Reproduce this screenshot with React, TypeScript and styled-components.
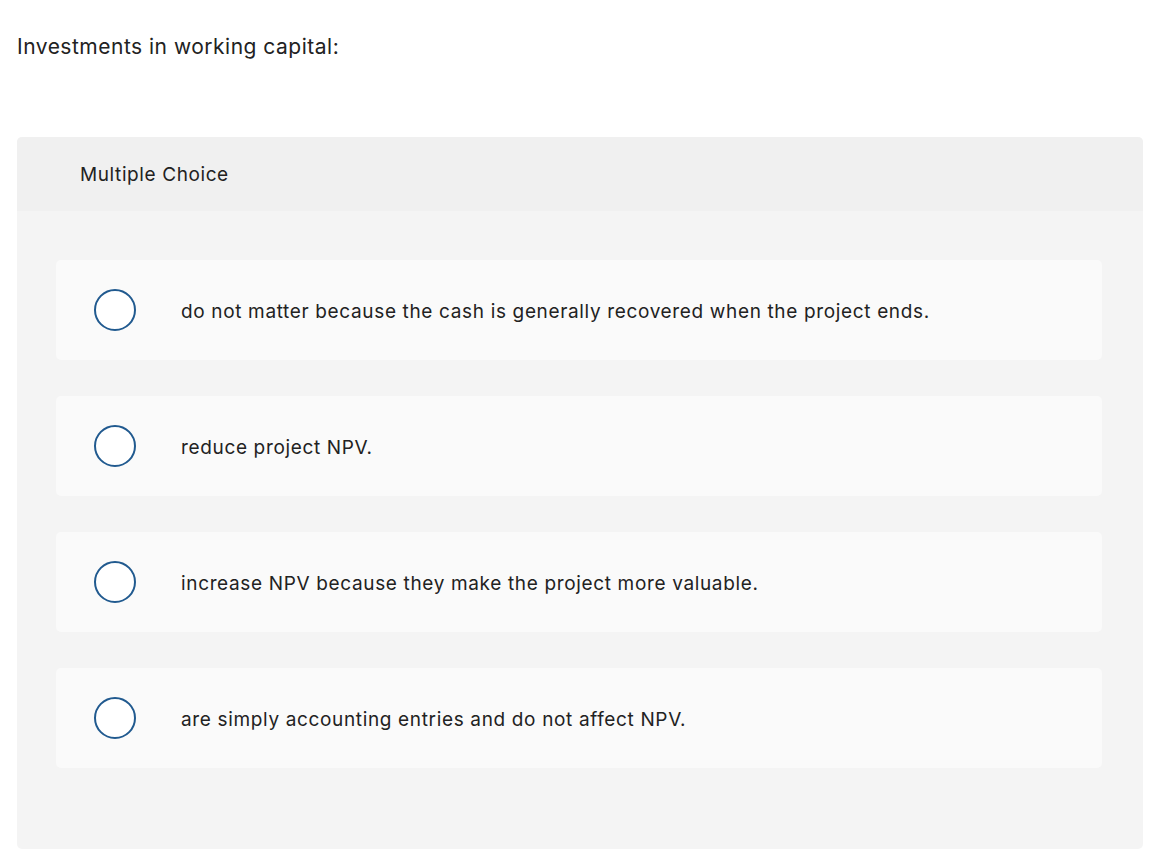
import React from 'react';
import styled, { createGlobalStyle } from 'styled-components';

const GlobalStyle = createGlobalStyle`
  html, body {
    margin: 0;
    padding: 0;
    background: #ffffff;
  }
  body {
    font-family: Inter, "Liberation Sans", Arial, sans-serif;
    color: #222222;
  }
`;

const options = [
  'do not matter because the cash is generally recovered when the project ends.',
  'reduce project NPV.',
  'increase NPV because they make the project more valuable.',
  'are simply accounting entries and do not affect NPV.',
];

const Page = styled.div`
  padding: 33px 13px 0 17px;
`;

const Question = styled.p`
  margin: 0;
  font-size: 21px;
  line-height: 28px;
  letter-spacing: 0.5px;
`;

const Panel = styled.section`
  margin-top: 76px;
  background: #f4f4f4;
  border-radius: 5px;
  overflow: hidden;
`;

const PanelHeader = styled.header`
  height: 74px;
  background: #f0f0f0;
  display: flex;
  align-items: center;
  padding-left: 63px;
  font-size: 19px;
  letter-spacing: 0.6px;
`;

const OptionList = styled.div`
  display: flex;
  flex-direction: column;
  gap: 36px;
  padding: 49px 41px 81px 39px;
`;

const Option = styled.label`
  height: 100px;
  display: flex;
  align-items: center;
  background: #fafafa;
  border-radius: 5px;
  padding-left: 38px;
  cursor: pointer;
`;

const Radio = styled.span`
  width: 38px;
  height: 38px;
  border: 2px solid #215a8f;
  border-radius: 50%;
  background: #ffffff;
  flex-shrink: 0;
`;

const OptionText = styled.span`
  margin-left: 45px;
  font-size: 19px;
  letter-spacing: 0.65px;
  padding-top: 2px;
`;

export default function App() {
  return (
    <Page>
      <GlobalStyle />
      <Question>Investments in working capital:</Question>
      <Panel>
        <PanelHeader>Multiple Choice</PanelHeader>
        <OptionList>
          {options.map((text) => (
            <Option key={text}>
              <Radio />
              <OptionText>{text}</OptionText>
            </Option>
          ))}
        </OptionList>
      </Panel>
    </Page>
  );
}
